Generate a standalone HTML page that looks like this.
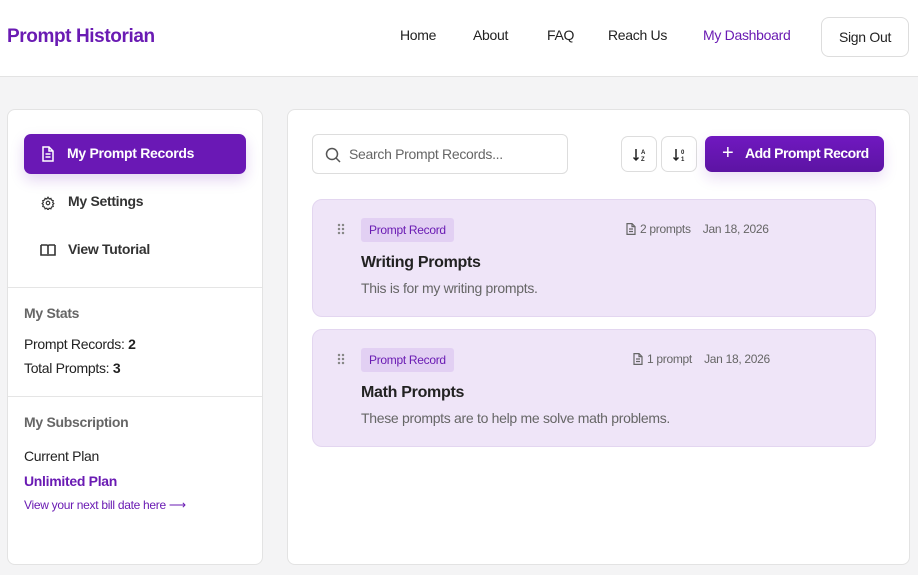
<!DOCTYPE html>
<html><head><style>
*{box-sizing:border-box;margin:0;padding:0}
body{width:918px;height:575px;background:#f4f4f5;font-family:"Liberation Sans",sans-serif;color:#222;position:relative;overflow:hidden;letter-spacing:-0.3px}
.hdr{position:absolute;left:0;top:0;width:918px;height:77px;background:#fff;border-bottom:1px solid #e3e3e3}
.logo{position:absolute;left:7px;top:26px;font-size:19px;font-weight:bold;color:#6a1bb3;letter-spacing:-0.4px}
.nav{position:absolute;top:27px;font-size:14px;color:#222}
.so{position:absolute;left:821px;top:17px;width:88px;height:40px;border:1px solid #ddd;border-radius:8px;font-size:14px;text-align:center;line-height:38px}
.side{position:absolute;left:7px;top:109px;width:256px;height:456px;background:#fff;border:1px solid #e3e3e3;border-radius:8px}
.act{position:absolute;left:16px;top:24px;width:222px;height:40px;background:#6a18b5;border-radius:7px;color:#fff;font-weight:bold;font-size:14px;line-height:38px;padding-left:43px;box-shadow:0 6px 14px rgba(106,24,181,.18)}
.it{position:absolute;left:60px;font-size:14px;font-weight:bold;color:#333}
.ic{position:absolute}
.hr{position:absolute;left:0;width:254px;border-top:1px solid #e5e5e5}
.t{position:absolute;left:16px;font-size:14px;color:#222}
.main{position:absolute;left:287px;top:109px;width:623px;height:456px;background:#fff;border:1px solid #e3e3e3;border-radius:8px}
.search{position:absolute;left:24px;top:24px;width:256px;height:40px;border:1px solid #ddd;border-radius:6px;font-size:14px;color:#666;line-height:38px;padding-left:36px}
.sb{position:absolute;top:26px;width:36px;height:36px;border:1px solid #ddd;border-radius:7px}
.add{position:absolute;left:417px;top:26px;width:179px;height:36px;background:linear-gradient(#7018c0,#5c14a3);border-radius:7px;color:#fff;font-weight:bold;font-size:14px;line-height:34px;padding-left:40px;box-shadow:0 6px 14px rgba(106,24,181,.15);letter-spacing:-0.5px}
.card{position:absolute;left:24px;width:564px;height:118px;background:#efe5f8;border:1px solid #e3d6f0;border-radius:10px}
.tag{position:absolute;left:48px;top:18px;height:24px;padding:0 8px;background:#e2d0f3;color:#6a1bb3;font-size:12px;line-height:24px;border-radius:3px}
.meta{position:absolute;top:22px;font-size:12px;color:#666}
.ct{position:absolute;left:48px;top:54px;font-size:16px;font-weight:bold;color:#222}
.cd{position:absolute;left:48px;top:80px;font-size:14px;color:#666}
.dots{position:absolute;left:24px;top:23px;width:8px;height:12px;background:radial-gradient(circle,#888 1.1px,transparent 1.4px) 0 0/4px 4px}
</style></head><body>
<div class="hdr">
<div class="logo">Prompt Historian</div>
<div class="nav" style="left:400px">Home</div>
<div class="nav" style="left:473px">About</div>
<div class="nav" style="left:547px">FAQ</div>
<div class="nav" style="left:608px">Reach Us</div>
<div class="nav" style="left:703px;color:#6a1bb3">My Dashboard</div>
<div class="so">Sign Out</div>
</div>
<div class="side">
<div class="act"><svg class="ic" style="left:17px;top:12px" width="14" height="16" viewBox="0 0 14 16" fill="none" stroke="#fff" stroke-width="1.5"><path d="M2 1h6l4 4v10H2z M8 1v4h4 M4.5 8h5 M4.5 11h5"/></svg>My Prompt Records</div>
<svg class="ic" style="left:33px;top:86px" width="14" height="14" viewBox="0 0 24 24" fill="none" stroke="#333" stroke-width="2"><circle cx="12" cy="12" r="3"/><path d="M12 2l2 3 3-1 1 3 3 1-1 3 2 2-2 2 1 3-3 1-1 3-3-1-2 3-2-3-3 1-1-3-3-1 1-3-2-2 2-2-1-3 3-1 1-3 3 1z"/></svg>
<div class="it" style="top:83px">My Settings</div>
<svg class="ic" style="left:32px;top:133px" width="16" height="15" viewBox="0 0 16 15" fill="none" stroke="#333" stroke-width="1.6"><path d="M1 2h5.5c.8 0 1.5.7 1.5 1.5V13M15 2H9.5C8.7 2 8 2.7 8 3.5V13M1 2v10h6M15 2v10H9"/></svg>
<div class="it" style="top:131px">View Tutorial</div>
<div class="hr" style="top:177px"></div>
<div class="t" style="top:195px;color:#666;font-weight:bold">My Stats</div>
<div class="t" style="top:226px">Prompt Records: <b>2</b></div>
<div class="t" style="top:250px">Total Prompts: <b>3</b></div>
<div class="hr" style="top:286px"></div>
<div class="t" style="top:304px;color:#666;font-weight:bold">My Subscription</div>
<div class="t" style="top:338px">Current Plan</div>
<div class="t" style="top:363px;color:#6a1bb3;font-weight:bold">Unlimited Plan</div>
<div class="t" style="top:388px;color:#6a1bb3;font-size:12px">View your next bill date here ⟶</div>
</div>
<div class="main">
<div class="search"><svg class="ic" style="left:12px;top:12px" width="16" height="16" viewBox="0 0 16 16" fill="none" stroke="#555" stroke-width="1.5"><circle cx="7" cy="7" r="5.5"/><path d="M11 11l4 4"/></svg>Search Prompt Records...</div>
<div class="sb" style="left:333px"><svg class="ic" style="left:10px;top:10px" width="16" height="16" viewBox="0 0 16 16"><path d="M4 2v11M1.5 10.5L4 13l2.5-2.5" fill="none" stroke="#222" stroke-width="1.5"/><text x="9" y="7" font-size="6" font-family="Liberation Sans" font-weight="bold" fill="#222">A</text><text x="9" y="14" font-size="6" font-family="Liberation Sans" font-weight="bold" fill="#222">Z</text></svg></div>
<div class="sb" style="left:373px"><svg class="ic" style="left:10px;top:10px" width="16" height="16" viewBox="0 0 16 16"><path d="M4 2v11M1.5 10.5L4 13l2.5-2.5" fill="none" stroke="#222" stroke-width="1.5"/><text x="9" y="7" font-size="6" font-family="Liberation Sans" font-weight="bold" fill="#222">0</text><text x="9" y="14" font-size="6" font-family="Liberation Sans" font-weight="bold" fill="#222">1</text></svg></div>
<div class="add"><span style="position:absolute;left:17px;font-weight:normal;font-size:20px">+</span>Add Prompt Record</div>
<div class="card" style="top:89px"><div class="dots"></div><div class="tag">Prompt Record</div>
<div class="meta" style="left:313px"><svg width="10" height="12" viewBox="0 0 10 12" fill="none" stroke="#666" stroke-width="1.2" style="vertical-align:-2px;margin-right:4px"><path d="M1 .6h5l3 3v7.8H1z M6 .6v3h3 M3 6h4 M3 8.5h4"/></svg>2 prompts &nbsp;&nbsp;&nbsp;Jan 18, 2026</div>
<div class="ct">Writing Prompts</div><div class="cd">This is for my writing prompts.</div></div>
<div class="card" style="top:219px"><div class="dots"></div><div class="tag">Prompt Record</div>
<div class="meta" style="left:320px"><svg width="10" height="12" viewBox="0 0 10 12" fill="none" stroke="#666" stroke-width="1.2" style="vertical-align:-2px;margin-right:4px"><path d="M1 .6h5l3 3v7.8H1z M6 .6v3h3 M3 6h4 M3 8.5h4"/></svg>1 prompt &nbsp;&nbsp;&nbsp;Jan 18, 2026</div>
<div class="ct">Math Prompts</div><div class="cd">These prompts are to help me solve math problems.</div></div>
</div>
</body></html>
